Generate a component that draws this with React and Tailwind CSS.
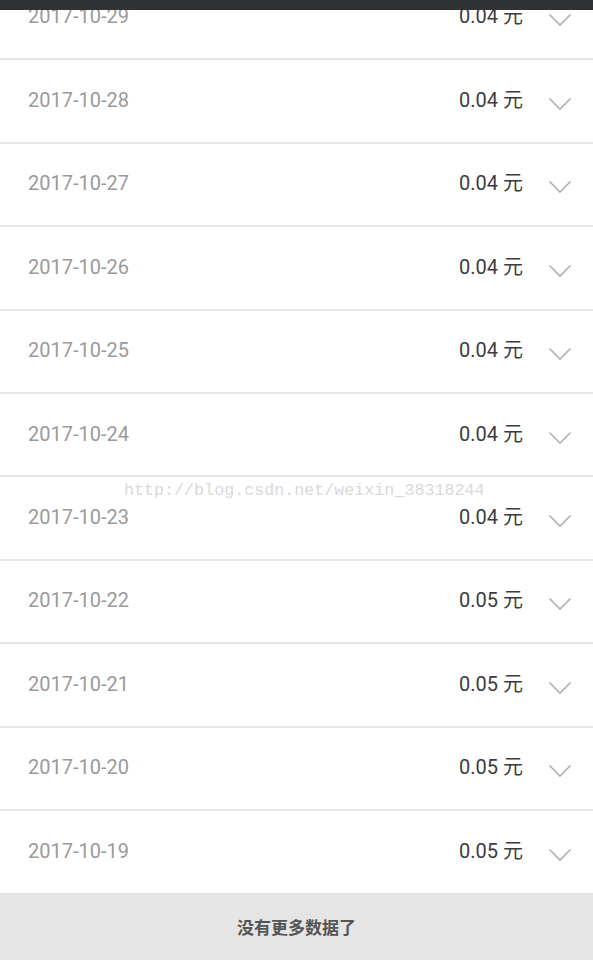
import React from "react";

const rows = [
  ["2017-10-29", "0.04"],
  ["2017-10-28", "0.04"],
  ["2017-10-27", "0.04"],
  ["2017-10-26", "0.04"],
  ["2017-10-25", "0.04"],
  ["2017-10-24", "0.04"],
  ["2017-10-23", "0.04"],
  ["2017-10-22", "0.05"],
  ["2017-10-21", "0.05"],
  ["2017-10-20", "0.05"],
  ["2017-10-19", "0.05"],
];

function Chevron() {
  return (
    <svg width="24" height="14" viewBox="0 0 24 14" className="mt-[6px]">
      <polyline points="1.5,1.5 12,12 22.5,1.5" fill="none" stroke="#b0b0b0" strokeWidth="1.6" />
    </svg>
  );
}

export default function App() {
  return (
    <div className="relative w-[593px] h-[960px] overflow-hidden bg-white font-['Roboto','Noto_Sans_CJK_SC',sans-serif]">
      <div className="relative z-10 h-[10px] bg-[#313234]" />
      <div className="h-[883px] overflow-hidden">
        <div className="-mt-[35px]">
          {rows.map(([d, a], i) => (
            <div
              key={d}
              className={`flex h-[83.4px] items-center pl-[28px] pr-[21px] ${i === 0 ? "" : "border-t-2 border-[#e6e6e6]"}`}
            >
              <span className="text-[20px] text-[#9a9a9a] -mt-[2px]">{d}</span>
              <span className="ml-auto translate-x-[1px] text-[20px] text-[#3c3c3c] -mt-[2px]">
                {a} 元
              </span>
              <span className="ml-[26px] flex">
                <Chevron />
              </span>
            </div>
          ))}
        </div>
      </div>
      <div className="flex h-[67px] items-center justify-center bg-[#e5e5e5] border-t border-[#e0e0e0]">
        <span className="text-[17px] font-bold text-[#555555] font-['Noto_Sans_CJK_SC',sans-serif]">没有更多数据了</span>
      </div>
      <div className="pointer-events-none absolute left-[124px] top-[480px] text-[16.7px] leading-[22px] text-[#d9d9d9] font-['Liberation_Mono',monospace]">
        http://blog.csdn.net/weixin_38318244
      </div>
    </div>
  );
}
